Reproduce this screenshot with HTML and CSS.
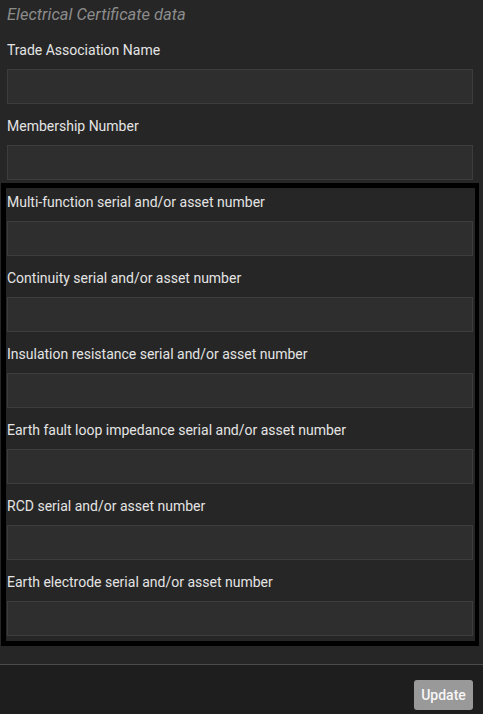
FILE: index.html
```html
<!DOCTYPE html>
<html lang="en">
<head>
<meta charset="utf-8">
<title>Electrical Certificate data</title>
<link rel="stylesheet" href="styles.css">
</head>
<body>
<div class="panel">
  <div class="content">
    <h2 class="title">Electrical Certificate data</h2>
    <div class="field">
      <label class="label">Trade Association Name</label>
      <input class="input" type="text">
    </div>
    <div class="field">
      <label class="label">Membership Number</label>
      <input class="input" type="text">
    </div>
    <div class="group">
      <div class="field">
        <label class="label">Multi-function serial and/or asset number</label>
        <input class="input" type="text">
      </div>
      <div class="field">
        <label class="label">Continuity serial and/or asset number</label>
        <input class="input" type="text">
      </div>
      <div class="field">
        <label class="label">Insulation resistance serial and/or asset number</label>
        <input class="input" type="text">
      </div>
      <div class="field">
        <label class="label">Earth fault loop impedance serial and/or asset number</label>
        <input class="input" type="text">
      </div>
      <div class="field">
        <label class="label">RCD serial and/or asset number</label>
        <input class="input" type="text">
      </div>
      <div class="field">
        <label class="label">Earth electrode serial and/or asset number</label>
        <input class="input" type="text">
      </div>
    </div>
  </div>
  <div class="footer">
    <button class="btn" type="button">Update</button>
  </div>
</div>
</body>
</html>
```
FILE: styles.css
```css
html, body {
  margin: 0;
  padding: 0;
  background: #1e1e1e;
  font-family: Roboto, "Liberation Sans", sans-serif;
}
.panel {
  width: 483px;
  height: 714px;
  display: flex;
  flex-direction: column;
}
.content {
  background: #262626;
  padding-bottom: 18px;
  border-bottom: 1px solid #4b4b4b;
}
.title {
  margin: 0;
  height: 40px;
  padding: 3px 0 0 7px;
  box-sizing: border-box;
  font-size: 16.5px;
  font-weight: 400;
  font-style: italic;
  line-height: 24px;
  color: #8c8c8c;
}
.field {
  display: flex;
  flex-direction: column;
  margin: 0 10px 12px 7px;
}
.label {
  font-size: 14px;
  line-height: 20px;
  color: #e4e4e4;
  margin-bottom: 9px;
}
.input {
  height: 35px;
  box-sizing: border-box;
  margin: 0;
  background: #2e2e2e;
  border: 1px solid #3d3d3d;
  border-radius: 0;
  outline: none;
  color: #e4e4e4;
  font: inherit;
  padding: 0 8px;
}
.group {
  margin: -9px 4px 0 1px;
  border-style: solid;
  border-color: #000;
  border-width: 5px 4px 5px 5px;
  padding: 4px 0 5px 0;
}
.group .field {
  margin: 0 2px 12px 1px;
}
.group .field:last-child {
  margin-bottom: 0;
}
.footer {
  flex: 1;
  background: #1e1e1e;
  display: flex;
  justify-content: flex-end;
  align-items: flex-start;
  padding: 15px 10px 0 0;
}
.btn {
  width: 59px;
  height: 30px;
  background: #999999;
  color: #f6f6f6;
  border: none;
  border-radius: 3px;
  font-family: Roboto, "Liberation Sans", sans-serif;
  font-size: 14px;
  font-weight: 500;
  padding: 0;
}
```
